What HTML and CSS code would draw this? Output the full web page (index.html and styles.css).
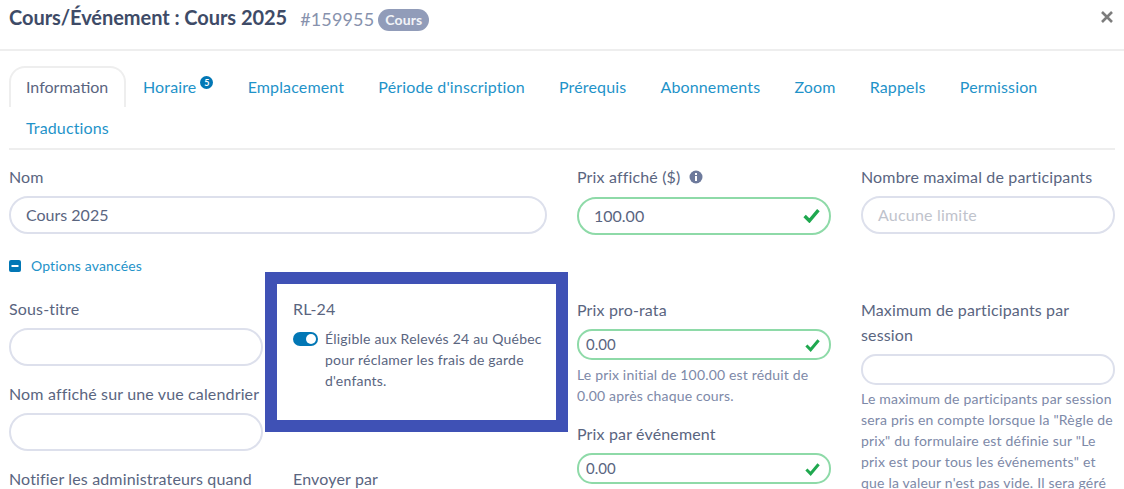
FILE: index.html
```html
<!DOCTYPE html>
<html lang="fr">
<head>
    <meta charset="UTF-8">
    <meta name="viewport" content="width=device-width, initial-scale=1.0">
    <title>Cours/Événement : Cours 2025</title>
    <link rel="stylesheet" href="styles.css">
</head>
<body>
    <header class="modal-header">
        <h1 class="modal-title">Cours/Événement : Cours 2025</h1>
        <span class="modal-id">#159955</span>
        <span class="pill">Cours</span>
        <svg class="close-icon" viewBox="0 0 14 14" aria-hidden="true"><path d="M2 2l10 10M12 2L2 12"/></svg>
    </header>

    <nav class="tabs">
        <a class="tab tab-active">Information</a>
        <a class="tab">Horaire<span class="tab-count">5</span></a>
        <a class="tab">Emplacement</a>
        <a class="tab">Période d'inscription</a>
        <a class="tab">Prérequis</a>
        <a class="tab">Abonnements</a>
        <a class="tab">Zoom</a>
        <a class="tab">Rappels</a>
        <a class="tab">Permission</a>
        <a class="tab">Traductions</a>
    </nav>

    <main class="form-grid">
        <div class="field field-wide">
            <label class="field-label">Nom</label>
            <div class="input">Cours 2025</div>
        </div>
        <div class="field">
            <label class="field-label field-label-icon">Prix affiché ($)
                <svg class="info-icon" viewBox="0 0 14 14" aria-hidden="true"><circle cx="7" cy="7" r="6.5"/><rect x="6" y="6" width="2" height="5" fill="#fff"/><rect x="6" y="3" width="2" height="2" fill="#fff"/></svg>
            </label>
            <div class="input input-valid">100.00
                <svg class="check" viewBox="0 0 16 14" aria-hidden="true"><path d="M1.5 7.5l4.5 4.5 8.5-10"/></svg>
            </div>
        </div>
        <div class="field">
            <label class="field-label">Nombre maximal de participants</label>
            <div class="input input-empty">Aucune limite</div>
        </div>

        <a class="advanced-toggle">
            <svg class="minus-icon" viewBox="0 0 12 12" aria-hidden="true"><rect width="12" height="12" rx="2"/><rect x="2.5" y="5" width="7" height="2" fill="#fff"/></svg>
            Options avancées
        </a>

        <div class="stack">
            <div class="field">
                <label class="field-label">Sous-titre</label>
                <div class="input"></div>
            </div>
            <div class="field">
                <label class="field-label">Nom affiché sur une vue calendrier</label>
                <div class="input"></div>
            </div>
            <div class="field">
                <label class="field-label">Notifier les administrateurs quand</label>
            </div>
        </div>

        <div class="stack">
            <div class="field field-rl">
                <label class="field-label">RL-24</label>
                <div class="switch-row">
                    <span class="switch"></span>
                    <p class="switch-text">Éligible aux Relevés 24 au Québec pour réclamer les frais de garde d'enfants.</p>
                </div>
            </div>
            <div class="field">
                <label class="field-label">Envoyer par</label>
            </div>
        </div>

        <div class="stack stack-offset">
            <div class="field">
                <label class="field-label">Prix pro-rata</label>
                <div class="input input-sm input-valid">0.00
                    <svg class="check" viewBox="0 0 16 14" aria-hidden="true"><path d="M1.5 7.5l4.5 4.5 8.5-10"/></svg>
                </div>
                <p class="help">Le prix initial de 100.00 est réduit de 0.00 après chaque cours.</p>
            </div>
            <div class="field">
                <label class="field-label">Prix par événement</label>
                <div class="input input-sm input-valid">0.00
                    <svg class="check" viewBox="0 0 16 14" aria-hidden="true"><path d="M1.5 7.5l4.5 4.5 8.5-10"/></svg>
                </div>
            </div>
        </div>

        <div class="stack stack-offset">
            <div class="field">
                <label class="field-label">Maximum de participants par session</label>
                <div class="input input-sm"></div>
                <p class="help help-tight">Le maximum de participants par session sera pris en compte lorsque la "Règle de prix" du formulaire est définie sur "Le prix est pour tous les événements" et que la valeur n'est pas vide. Il sera géré</p>
            </div>
        </div>
    </main>
</body>
</html>
```

FILE: styles.css
```css
html, body { height: 489px; overflow: hidden; }
body { margin: 0; padding: 0 9px; background: #fff; color: #5a657f; font-family: "Lato", "Noto Sans", sans-serif; font-size: 16px; letter-spacing: 0.15px; }

.modal-header { display: flex; align-items: center; height: 51px; margin: 0 -9px; padding: 0 9px 15px; box-sizing: border-box; border-bottom: 2px solid #eee; }
.modal-title { margin: 0; font-size: 20px; font-weight: 700; letter-spacing: -0.05px; color: #3e4b67; }
.modal-id { margin: 3px 0 0 13px; font-size: 18px; color: #8792ad; }
.pill { margin: 6px 0 0 4px; padding: 2px 7px; border-radius: 11px; background: #919cb9; color: #f2f4f8; font-size: 14px; font-weight: 700; line-height: 18px; }
.close-icon { width: 14px; height: 14px; margin-left: auto; margin-right: 1px; fill: none; stroke: #7d7d7d; stroke-width: 2.6; }

.tabs { display: flex; flex-wrap: wrap; margin-top: 15px; border-bottom: 2px solid #eee; letter-spacing: 0.14px; }
.tab { padding: 10px 17.2px 0 17px; height: 41px; box-sizing: border-box; color: #1f93c9; line-height: 21px; white-space: nowrap; }
.tab-active { width: 117px; color: #5a657f; border: 2px solid #eee; border-bottom: 0; border-radius: 16px 16px 0 0; padding: 8px 15px 0; letter-spacing: 0; }
.tab-count { display: inline-block; vertical-align: top; width: 13px; height: 13px; margin: 0 0 0 4px; border-radius: 50%; background: #0277b5; color: #fff; font-size: 9px; font-weight: 700; line-height: 13px; text-align: center; letter-spacing: 0; }

.form-grid { display: grid; grid-template-columns: repeat(4, 254px); column-gap: 30px; margin-top: 14px; }
.field { display: flex; flex-direction: column; }
.field-wide { grid-column: span 2; }
.field-label { margin-bottom: 7px; line-height: 25px; }
.field-label-icon { margin-bottom: 8px; }
.info-icon { width: 14px; height: 14px; margin-left: 4px; vertical-align: -1px; fill: #6d7a9c; }

.input { position: relative; display: flex; align-items: center; box-sizing: border-box; height: 38px; padding: 0 15px 2px; border: 2px solid #dde0ec; border-radius: 19px; background: #fff; letter-spacing: 0; }
.input-valid { border-color: #8edaa8; }
.input-sm { height: 31px; padding: 0 7px 2px; border-radius: 15px; font-size: 15px; }
.input-empty { color: #bfc3cc; letter-spacing: 0.2px; }
.check { position: absolute; right: 9px; top: 50%; width: 17px; height: 15px; margin-top: -8px; fill: none; stroke: #1fa84f; stroke-width: 3.2; }
.input-sm .check { width: 15px; height: 14px; margin-top: -7px; }

.advanced-toggle { grid-column: 1 / -1; display: flex; align-items: center; gap: 10px; margin: 21px 0 20px; color: #1f93c9; font-size: 14px; line-height: 20px; }
.minus-icon { width: 12px; height: 12px; fill: #0277b5; }

.stack { display: flex; flex-direction: column; gap: 15px; }
.stack-offset { padding-top: 1px; }
.help { margin: 4px 0 0; color: #7d89a8; font-size: 14px; line-height: 21px; letter-spacing: 0.17px; }
.help-tight { margin-top: 3px; letter-spacing: 0.2px; }

.field-rl { position: relative; height: 155px; }
.field-rl::before { content: ""; position: absolute; top: -24px; left: -28px; width: 279px; height: 136px; border: 12px solid #3f51b5; }
.switch-row { position: relative; display: flex; gap: 7px; }
.switch { flex: none; position: relative; width: 25px; height: 14px; margin-top: 4px; border-radius: 7px; background: #0277b5; }
.switch::after { content: ""; position: absolute; right: 2px; top: 2px; width: 10px; height: 10px; border-radius: 50%; background: #fff; }
.switch-text { margin: 0; font-size: 14px; line-height: 21px; letter-spacing: 0.22px; }
```
